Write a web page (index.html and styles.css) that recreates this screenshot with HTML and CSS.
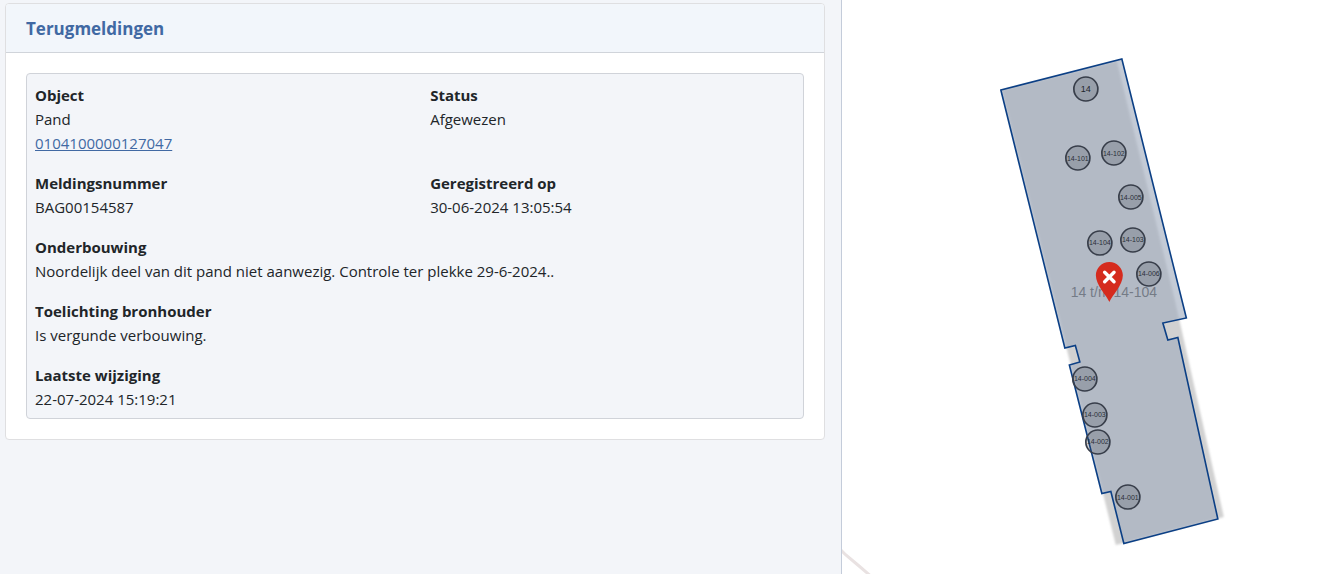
FILE: index.html
```
<!DOCTYPE html>
<html lang="nl">
<head>
  <meta charset="UTF-8" />
  <meta name="viewport" content="width=device-width, initial-scale=1.0" />
  <title>Terugmeldingen</title>
  <link rel="stylesheet" href="styles.css">
</head>
<body>
  <main class="panel">
    <section class="card">
      <h1 class="card-header">Terugmeldingen</h1>
      <div class="card-body">
        <dl class="melding">
          <div class="field">
            <dt>Object</dt>
            <dd>Pand</dd>
            <dd><a href="#">0104100000127047</a></dd>
          </div>
          <div class="field">
            <dt>Status</dt>
            <dd>Afgewezen</dd>
          </div>
          <div class="field">
            <dt>Meldingsnummer</dt>
            <dd>BAG00154587</dd>
          </div>
          <div class="field">
            <dt>Geregistreerd op</dt>
            <dd>30-06-2024 13:05:54</dd>
          </div>
          <div class="field wide">
            <dt>Onderbouwing</dt>
            <dd>Noordelijk deel van dit pand niet aanwezig. Controle ter plekke 29-6-2024..</dd>
          </div>
          <div class="field wide">
            <dt>Toelichting bronhouder</dt>
            <dd>Is vergunde verbouwing.</dd>
          </div>
          <div class="field wide">
            <dt>Laatste wijziging</dt>
            <dd>22-07-2024 15:19:21</dd>
          </div>
        </dl>
      </div>
    </section>
  </main>

  <div class="map">
    <svg viewBox="842 0 495 574" preserveAspectRatio="xMidYMid slice" role="img" aria-label="Kaart">
      <defs>
        <filter id="soft"><feGaussianBlur stdDeviation="0.8" /></filter>
      </defs>

      <!-- background layer -->
      <path class="road" d="M838 547 L846 555 L858 565 L872 577" />
      <polygon class="base" filter="url(#soft)" points="1002,90 1117,61 1175,300 1224,517 1116,545" />
      <text class="label" x="1114" y="297">14 t/m 14-104</text>

      <!-- pand -->
      <polygon class="pand" points="1001,90 1122,59 1186.5,318 1163,323 1168,340 1178,337.5 1218,519 1124,543.5 1111,491.5 1102,493.5 1069.5,365 1080,362 1075.5,345.5 1065,348" />

      <!-- verblijfsobjecten -->
      <g class="vbo">
        <circle cx="1086" cy="89" r="12" /><text class="big" x="1086" y="92">14</text>
        <circle cx="1078" cy="158" r="12" /><text x="1078" y="161">14-101</text>
        <circle cx="1114" cy="153" r="12" /><text x="1114" y="156">14-102</text>
        <circle cx="1131" cy="197" r="12" /><text x="1131" y="200">14-005</text>
        <circle cx="1100" cy="243" r="12" /><text x="1100" y="245">14-104</text>
        <circle cx="1133" cy="240" r="12" /><text x="1133" y="242">14-103</text>
        <circle cx="1149" cy="274" r="12" /><text x="1149" y="276">14-006</text>
        <circle cx="1085" cy="379" r="12" /><text x="1085" y="381">14-004</text>
        <circle cx="1095" cy="415" r="12" /><text x="1095" y="417">14-003</text>
        <circle cx="1098" cy="442" r="12" /><text x="1098" y="444">14-002</text>
        <circle cx="1128" cy="497" r="12" /><text x="1128" y="500">14-001</text>
      </g>

      <!-- marker -->
      <path class="pin" d="M1109.5 302 C1107 296 1096 285 1096 275.3 C1096 268 1102 262 1109.5 262 C1117 262 1123 268 1123 275.3 C1123 285 1112 296 1109.5 302 Z" />
      <path class="cross" d="M1104.8 272.3 L1114.2 281.7 M1114.2 272.3 L1104.8 281.7" />
    </svg>
  </div>
</body>
</html>
```
FILE: styles.css
```
* {
  box-sizing: border-box;
}

body {
  display: flex;
  min-height: 100vh;
  margin: 0;
  font-family: "Segoe UI", "Open Sans", "Noto Sans", sans-serif;
  font-size: 15px;
  line-height: 24px;
  color: #212529;
  background: #fff;
}

.panel {
  flex: 0 0 63%;
  padding: 3px 16px 16px 5px;
  background: #f3f5f9;
  border-right: 1px solid #c4ccda;
}

.card {
  background: #fff;
  border: 1px solid #dfdfe1;
  border-radius: 4px;
}

.card-header {
  margin: 0;
  padding: 13px 20px 11px;
  font-size: 17px;
  line-height: 24px;
  font-weight: 700;
  color: #4169a3;
  background: #f2f6fb;
  border-bottom: 1px solid #d0d4da;
  border-radius: 3px 3px 0 0;
}

.card-body {
  padding: 20px;
}

.melding {
  display: grid;
  grid-template-columns: 1fr 1fr;
  gap: 16px 30px;
  margin: 0;
  padding: 9px 8px 7px;
  background: #f3f5f9;
  border: 1px solid #d0d3d9;
  border-radius: 4px;
}

.wide {
  grid-column: 1 / -1;
}

dt {
  font-weight: 700;
}

dd {
  margin: 0;
}

a {
  color: #4169a3;
}

.map {
  flex: 1;
  position: relative;
  overflow: hidden;
  background: #fff;
}

.map svg {
  position: absolute;
  width: 100%;
  height: 100%;
  font-family: "Liberation Sans", Arial, sans-serif;
}

.road {
  fill: none;
  stroke: #e9e2e2;
  stroke-width: 3;
}

.base {
  fill: #d1d1d1;
}

.label {
  font-size: 14px;
  text-anchor: middle;
  fill: #222;
}

.pand {
  fill: #a2adbf;
  fill-opacity: 0.64;
  stroke: #0b3f85;
  stroke-width: 1.6;
}

.vbo circle {
  fill: #3a404c;
  fill-opacity: 0.22;
  stroke: #383e4a;
  stroke-width: 1.7;
}

.vbo text {
  font-size: 7px;
  text-anchor: middle;
  fill: #2a2f38;
}

.vbo .big {
  font-size: 9px;
  fill: #22262e;
}

.pin {
  fill: #d52b1e;
}

.cross {
  stroke: #fff;
  stroke-width: 3.4;
  stroke-linecap: round;
}
```
